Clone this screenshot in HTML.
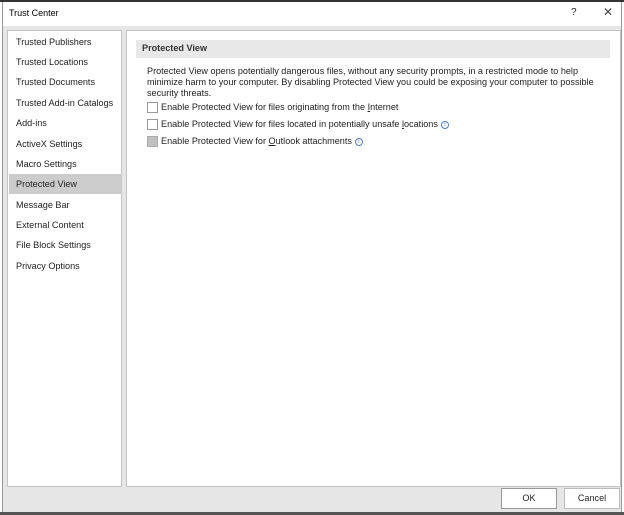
<!DOCTYPE html>
<html><head><style>
*{margin:0;padding:0;box-sizing:border-box}
body{width:624px;height:515px;background:#fff;font-family:"Liberation Sans",sans-serif;font-size:9.1px;color:#222;position:relative;overflow:hidden}
.abs{position:absolute}
.nav div{position:absolute;left:1px;width:113px;height:20px;line-height:20px;padding-left:7px;white-space:nowrap}
.cb{position:absolute;left:147px;width:11px;height:11px;border:1px solid #999;background:#fff}
.t{position:absolute;left:161px;white-space:nowrap}
.i{display:inline-block;width:8px;height:8px;border:1px solid #4a7fd0;border-radius:50%;font-size:6px;line-height:6px;text-align:center;color:#4a7fd0;margin-left:3px;vertical-align:1px}
.btn{position:absolute;top:488px;height:21px;width:56px;background:#fff;border:1px solid #bbb;text-align:center;line-height:19px}
</style></head><body>
<div class="abs" style="left:0;top:0;width:624px;height:2px;background:#333"></div>
<div class="abs" style="left:2px;top:2px;width:620px;height:510px;background:#e6e6e6;border-left:1px solid #999;border-right:1px solid #999"></div>
<div class="abs" style="left:3px;top:2px;width:618px;height:24px;background:#fff"></div>
<div class="abs" style="left:9px;top:8px;font-size:9px;color:#000">Trust Center</div>
<div class="abs" style="left:571px;top:7px;font-size:10px">?</div>
<div class="abs" style="left:603px;top:5px;font-size:12px;color:#444">✕</div>
<div class="abs nav" style="left:7px;top:30px;width:115px;height:457px;background:#fff;border:1px solid #c4c4c4">
<div style="top:1px">Trusted Publishers</div>
<div style="top:21px">Trusted Locations</div>
<div style="top:41px">Trusted Documents</div>
<div style="top:62px">Trusted Add-in Catalogs</div>
<div style="top:82px">Add-ins</div>
<div style="top:103px">ActiveX Settings</div>
<div style="top:123px">Macro Settings</div>
<div style="top:143px;background:#ccc">Protected View</div>
<div style="top:164px">Message Bar</div>
<div style="top:184px">External Content</div>
<div style="top:204px">File Block Settings</div>
<div style="top:225px">Privacy Options</div>
</div>
<div class="abs" style="left:126px;top:30px;width:495px;height:457px;background:#fff;border:1px solid #c4c4c4"></div>
<div class="abs" style="left:136px;top:40px;width:474px;height:18px;background:#e8e8e8;font-weight:bold;padding-left:6px;line-height:17px;color:#333">Protected View</div>
<div class="abs" style="left:147px;top:66px;width:450px;line-height:11px">Protected View opens potentially dangerous files, without any security prompts, in a restricted mode to help minimize harm to your computer. By disabling Protected View you could be exposing your computer to possible security threats.</div>
<div class="cb" style="top:102px"></div><div class="t" style="top:102px">Enable Protected View for files originating from the <u>I</u>nternet</div>
<div class="cb" style="top:119px"></div><div class="t" style="top:119px">Enable Protected View for files located in potentially unsafe <u>l</u>ocations<span class="i">i</span></div>
<div class="cb" style="top:136px;background:#c0c0c0;border-color:#aaa"></div><div class="t" style="top:136px">Enable Protected View for <u>O</u>utlook attachments<span class="i">i</span></div>
<div class="btn" style="left:501px;border-color:#999">OK</div>
<div class="btn" style="left:564px">Cancel</div>
<div class="abs" style="left:0;top:512px;width:624px;height:3px;background:#555"></div>
</body></html>
